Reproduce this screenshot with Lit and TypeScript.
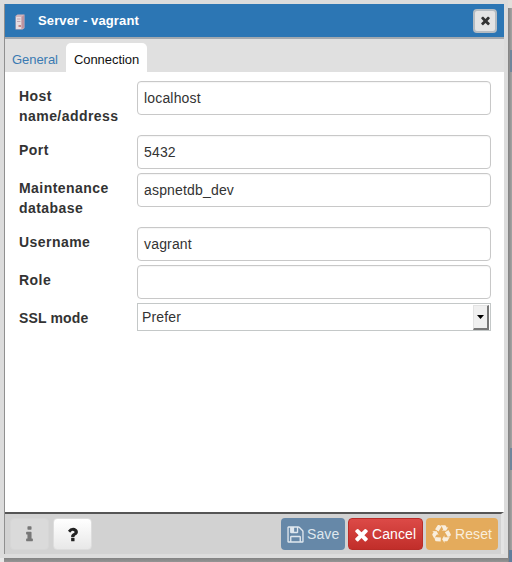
import { LitElement, html, css, svg } from "lit";
import { customElement } from "lit/decorators.js";

const PATHS = {
  save: "M512 1536h768v-384h-768v384zm896 0h128v-896q0-14-10-38.5t-20-34.5l-281-281q-10-10-34-20t-39-10v416q0 40-28 68t-68 28h-576q-40 0-68-28t-28-68v-416h-128v1280h128v-416q0-40 28-68t68-28h832q40 0 68 28t28 68v416zm-384-928v-320q0-13-9.5-22.5t-22.5-9.5h-192q-13 0-22.5 9.5t-9.5 22.5v320q0 13 9.5 22.5t22.5 9.5h192q13 0 22.5-9.5t9.5-22.5zm640 32v928q0 40-28 68t-68 28h-1344q-40 0-68-28t-28-68v-1344q0-40 28-68t68-28h928q40 0 88 20t76 48l280 280q28 28 48 76t20 88z",
  close: "M1490 1322q0 40-28 68l-136 136q-28 28-68 28t-68-28l-294-294-294 294q-28 28-68 28t-68-28l-136-136q-28-28-28-68t28-68l294-294-294-294q-28-28-28-68t28-68l136-136q28-28 68-28t68 28l294 294 294-294q28-28 68-28t68 28l136 136q28 28 28 68t-28 68l-294 294 294 294q28 28 28 68z",
  info: "M1216 1344v128q0 26-19 45t-45 19h-512q-26 0-45-19t-19-45v-128q0-26 19-45t45-19h64v-384h-64q-26 0-45-19t-19-45v-128q0-26 19-45t45-19h384q26 0 45 19t19 45v576h64q26 0 45 19t19 45zm-128-1152v192q0 26-19 45t-45 19h-256q-26 0-45-19t-19-45v-192q0-26 19-45t45-19h256q26 0 45 19t19 45z",
  help: "M1088 1256v240q0 16-12 28t-28 12h-240q-16 0-28-12t-12-28v-240q0-16 12-28t28-12h240q16 0 28 12t12 28zm316-600q0 54-15.5 101t-35 76.5-55 59.5-57.5 43.5-61 35.5q-41 23-68.5 65t-27.5 67q0 17-12 32.5t-28 15.5h-240q-15 0-25.5-18.5t-10.5-37.5v-45q0-83 65-156.5t143-108.5q59-27 84-56t25-76q0-42-46.5-74t-107.5-32q-65 0-108 29-35 25-107 115-13 16-31 16-12 0-25-8l-164-125q-13-10-15.5-25t5.5-28q160-266 464-266 80 0 161 31t146 83 106 127.5 41 158.5z",
  recycle: "M836 1169l-15 368-2 22-420-29q-36-3-67-31.5t-47-65.5q-11-27-14.5-55t4-65 12-55 21.5-64 19-53q78 12 509 28zm-387-586l180 379-147-92q-63 72-111.5 144.5t-72.5 125-39.5 94.5-18.5 63l-4 21-190-357q-17-26-18-56t6-47l8-18q35-63 114-188l-140-86zm1231 517l-188 359q-12 29-36.5 46.5t-43.5 20.5l-18 4q-71 7-219 12l8 164-230-367 211-362 7 173q170 16 283 5t170-33zm-785-924q-47 63-265 435l-317-187-19-12 225-356q20-31 60-45t80-10q24 2 48.5 12t42 21 41.5 33 36 34.5 36 39.5 32 35zm655 307l212 363q18 37 12.5 76t-27.5 74q-13 20-33 37t-38 28-48.5 22-47 16-51.5 14-46 12q-34-72-265-436l313-195zm-143-226l142-83-220 373-419-20 151-86q-34-89-75-166t-75.5-123.5-64.5-80-47-46.5l-17-13 405 1q31-3 58 10.5t39 28.5l11 15q39 61 112 190z",
};

const icon = (name: keyof typeof PATHS) =>
  html`<svg class="icon ${name}" viewBox="0 0 1792 1792">${svg`<path d=${PATHS[name]} />`}</svg>`;

const FIELDS = [
  { label: "Host name/address", value: "localhost", tall: true },
  { label: "Port", value: "5432", tall: false },
  { label: "Maintenance database", value: "aspnetdb_dev", tall: true },
  { label: "Username", value: "vagrant", tall: false },
  { label: "Role", value: "", tall: false },
];

@customElement("app-root")
export class AppRoot extends LitElement {
  static styles = css`
    :host {
      display: block;
      box-sizing: border-box;
      height: 562px;
      padding: 0 4px 4px 0;
      overflow: hidden;
      background:
        linear-gradient(#e2dfdb, #e2dfdb) 100% 0 / 4px 8px no-repeat,
        linear-gradient(#e8e8e8, #e8e8e8) 0 100% / 4px 4px no-repeat,
        linear-gradient(#5f7d9c, #5f7d9c) 100% 100% / 3px 12px no-repeat,
        linear-gradient(#70859b, #70859b) 100% 50px / 2px 22px no-repeat,
        linear-gradient(#70859b, #70859b) 100% 448px / 2px 22px no-repeat,
        linear-gradient(90deg, #828282, #a4a4a4) 100% 0 / 4px 100% no-repeat,
        linear-gradient(#828282, #959595) 0 100% / 100% 4px no-repeat;
      font-family: "Liberation Sans", Arial, sans-serif;
      font-size: 14px;
      color: #333;
    }
    * { box-sizing: border-box; }
    .frame {
      height: 558px;
      padding: 4px;
      background: #dcdcdc;
    }
    .dialog {
      height: 550px;
      display: flex;
      flex-direction: column;
      border-left: 1px solid #909090;
      background: #fff;
    }
    .header {
      flex: none;
      height: 35px;
      display: flex;
      align-items: center;
      padding: 0 7px 0 8px;
      background: #2c76b4;
      border-bottom: 2px solid #a3a9af;
      color: #fff;
      font-weight: bold;
      font-size: 13px;
      letter-spacing: 0.12px;
    }
    .server { width: 14px; height: 16px; margin: 2px 11px 0 0; }
    .title { flex: 1; }
    .x {
      width: 24px;
      height: 24px;
      display: grid;
      place-items: center;
      border: 2px solid #b5bcc2;
      border-radius: 4px;
      background: #e4e4e4;
    }
    .tabs {
      flex: none;
      height: 33px;
      display: flex;
      align-items: flex-end;
      background: #e0e0e0;
      font-size: 13px;
    }
    .tab { height: 29px; line-height: 33px; padding: 0 8px 0 7px; color: #3a7ab2; letter-spacing: -0.05px; }
    .tab.on { padding: 0 8px; border-radius: 5px 5px 0 0; background: #fff; color: #111; }
    .body { flex: 1; padding: 9px 13px 0 14px; }
    .row { display: flex; height: 38px; }
    .row.tall { height: 54px; }
    .label {
      width: 118px;
      padding: 5px 14px 0 0;
      line-height: 20px;
      font-weight: bold;
      letter-spacing: 0.45px;
    }
    .label.select-label { letter-spacing: 0.15px; }
    .input {
      flex: 1;
      height: 34px;
      border: 1px solid #c8c8c8;
      border-radius: 4px;
      padding: 0 6px;
      line-height: 33px;
      letter-spacing: 0.17px;
      box-shadow: inset 0 1px 1px rgba(0, 0, 0, 0.04);
    }
    .select {
      flex: 1;
      height: 28px;
      display: flex;
      justify-content: space-between;
      border: 1px solid #c4c8c8;
      padding: 1px 1px 1px 4px;
      line-height: 25px;
      letter-spacing: 0.15px;
    }
    .drop {
      width: 16px;
      height: 25px;
      display: grid;
      place-items: center;
      background: #f0f0f0;
      border: 1px solid #e3e3e3;
      border-right: 2px solid #777;
      border-bottom: 2px solid #777;
    }
    .arrow { width: 7px; height: 4px; fill: #000; display: block; }
    .footer {
      flex: none;
      height: 42px;
      display: flex;
      align-items: flex-start;
      padding: 4px 3px 0 5px;
      background: #d2d2d2;
      border-top: 2px solid #555;
      border-right: 3px solid #e4e4e4;
    }
    .btn {
      height: 32px;
      display: flex;
      align-items: center;
      border-radius: 4px;
      color: #fff;
      letter-spacing: 0.1px;
    }
    .square { width: 39px; justify-content: center; border: 1px solid #ddd; background: linear-gradient(#fff, #e8e8e8); }
    .square.off { background: #dadada; margin-right: 4px; border-color: #d6d6d6; }
    .gap { flex: 1; }
    .btn.blue { width: 64px; padding-left: 5px; background: #6688a8; color: #dfe7ee; margin-right: 3px; }
    .btn.red { width: 75px; padding-left: 5px; background: linear-gradient(#dc4a47, #c12e2a); border: 1px solid #b92c28; margin-right: 3px; }
    .btn.amber { width: 72px; padding-left: 5px; background: #e4ab5c; color: #f9eedd; }
    .icon { display: block; flex: none; fill: currentColor; }
    .x .icon { width: 13px; height: 13px; color: #333; }
    .square .icon { width: 19px; height: 19px; color: #222; }
    .square.off .icon { color: #777; }
    .icon.save { width: 19px; height: 19px; margin-right: 2px; }
    .red .icon { width: 19px; height: 19px; margin: 0 1px 0 -2px; }
    .icon.recycle { width: 19px; height: 19px; margin: 0 4px 0 1px; }
  `;

  render() {
    return html`
      <div class="frame">
        <div class="dialog">
          <div class="header">
            <svg class="server" viewBox="0 0 14 16">
              <path d="M2.500 2 4.500 .5h7V14l-2 1.500h-7z" fill="#d3b4ba" />
              <path d="M3 3h5.500v12H3z" fill="#e6dce0" />
              <path d="M4 4.500h3.500v1H4zM4 7h3.500v1H4z" fill="#c3a5b2" />
              <path d="M8.500 3l2.500-2v12.500L8.500 15z" fill="#bd93a0" />
              <path d="M5.500 11h2.500v2H5.500z" fill="#c48684" />
            </svg>
            <span class="title">Server - vagrant</span>
            <span class="x">${icon("close")}</span>
          </div>
          <div class="tabs">
            <span class="tab">General</span>
            <span class="tab on">Connection</span>
          </div>
          <div class="body">
            ${FIELDS.map(
              (f) => html`<div class="row ${f.tall ? "tall" : ""}">
                <div class="label">${f.label}</div>
                <div class="input">${f.value}</div>
              </div>`
            )}
            <div class="row">
              <div class="label select-label">SSL mode</div>
              <div class="select">
                <span>Prefer</span>
                <span class="drop"><svg class="arrow" viewBox="0 0 7 4"><path d="M0 0h7L3.500 4z" /></svg></span>
              </div>
            </div>
          </div>
          <div class="footer">
            <span class="btn square off">${icon("info")}</span>
            <span class="btn square">${icon("help")}</span>
            <span class="gap"></span>
            <span class="btn blue">${icon("save")}Save</span>
            <span class="btn red">${icon("close")}Cancel</span>
            <span class="btn amber">${icon("recycle")}Reset</span>
          </div>
        </div>
      </div>
    `;
  }
}
